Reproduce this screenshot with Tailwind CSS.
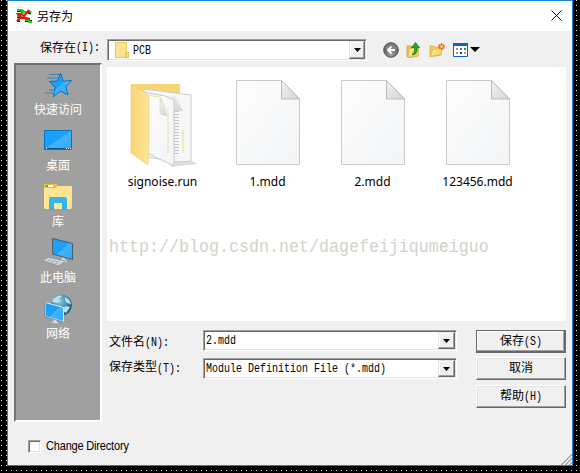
<!DOCTYPE html>
<html lang="zh-CN">
<head>
<meta charset="utf-8">
<title>另存为</title>
<script src="https://cdn.jsdelivr.net/npm/@tailwindcss/browser@4"></script>
</head>
<body class="w-[580px] h-[473px] overflow-hidden bg-black bg-[radial-gradient(circle_at_1.5px_0.5px,#e8e8e8_0.7px,transparent_0.8px)] bg-[length:5px_5px] pl-[7px] text-black text-[12px] font-['Liberation_Mono','Noto_Sans_CJK_SC',monospace]">
<svg class="absolute w-0 h-0">
  <defs>
    <linearGradient id="paper" x1="0" y1="0" x2="1" y2="1"><stop offset="0" stop-color="#fdfdfd"/><stop offset="1" stop-color="#f2f4f6"/></linearGradient>
    <linearGradient id="curl" x1="0" y1="0" x2="1" y2="1"><stop offset="0" stop-color="#f2f2f2"/><stop offset="1" stop-color="#d4d4d4"/></linearGradient>
    <linearGradient id="gold" x1="0" y1="0" x2="1" y2="1"><stop offset="0" stop-color="#fff0a8"/><stop offset="1" stop-color="#f2c94e"/></linearGradient>
    <linearGradient id="cover" x1="0" y1="0" x2="1" y2="0"><stop offset="0" stop-color="#f8d775"/><stop offset="1" stop-color="#ffe49a"/></linearGradient>
    <linearGradient id="blue" x1="0" y1="0" x2="1" y2="1"><stop offset="0" stop-color="#1aa0fa"/><stop offset=".5" stop-color="#1ba1fb"/><stop offset=".5" stop-color="#42b4ff"/><stop offset="1" stop-color="#2fa8fb"/></linearGradient>
    <radialGradient id="globe" cx=".4" cy=".3" r=".7"><stop offset="0" stop-color="#8fc9e0"/><stop offset=".6" stop-color="#3a88ad"/><stop offset="1" stop-color="#1d5777"/></radialGradient>
    <radialGradient id="ball" cx=".5" cy=".8" r=".8"><stop offset="0" stop-color="#a0a0a0"/><stop offset="1" stop-color="#4a4a4a"/></radialGradient>
    <symbol id="file" viewBox="0 0 64 85"><path d="M.5.5H45.500L63.500 18.500V84.500H.5Z" fill="url(#paper)" stroke="#c9cbcc"/><path d="M45.500.5V19H63.500Z" fill="url(#curl)" stroke="#bcbcbc"/></symbol>
  </defs>
</svg>
<main class="relative w-[566px] h-[466px] bg-[#f0f0f0] border border-[#1883d7] flex flex-col">
  <header class="h-[30px] shrink-0 bg-white flex items-center pl-[8px] pr-[10px]">
    <svg class="w-4 h-4" viewBox="0 0 16 16" fill="none"><path d="M1 2.500h4l3 2M12 4l3 1M1 8.500h4M9 12.500h3l2 1h2M1 12.500h3" stroke="#111" stroke-width="3"/><path d="M1 2h4l2 2h3M12 3l3 1M1 8h4M9 12h3l2 2h2M1 12h3" stroke="#08e010" stroke-width="2.200"/><path d="M1 13 5 9 2 6h3l3 2 5-6M4 10h6l4 1M7 8l4 3" stroke="#f00d0d" stroke-width="2"/></svg>
    <span class="ml-[5px] -mt-px text-[12px] leading-[16px] font-['Noto_Sans_CJK_SC',sans-serif]">另存为</span>
    <svg class="ml-auto -mt-[2px] w-[11px] h-[11px]" viewBox="0 0 11 11"><path d="m.5.5 10 10m0-10-10 10" stroke="#111"/></svg>
  </header>
  <div class="h-[32px] shrink-0 flex items-center pt-[6px] pl-[32px]">
    <div class="w-[67px] flex items-center leading-[18px] h-[18px] -mt-[2px]"><span>保存在</span><span class="text-[10px] scale-y-120">(I):</span></div>
    <div class="w-[260px] h-[22px] shrink-0 border border-t-[#a0a0a0] border-l-[#a0a0a0] border-b-white border-r-white shadow-[inset_1px_1px_#696969,inset_-1px_-1px_#e3e3e3] p-px bg-white flex items-center pl-[7px] text-[10px]">
      <svg class="w-[14px] h-[16px]" viewBox="0 0 14 16"><path d="M.5.5h11v9l2 1v5H.5Z" fill="#ffe391" stroke="#edc658"/><path d="M11 10v5.500" stroke="#d6a934"/></svg>
      <span class="ml-[4px] scale-y-120">PCB</span>
      <div class="ml-auto w-[16px] h-[18px] border border-t-[#e3e3e3] border-l-[#e3e3e3] border-r-[#696969] border-b-[#696969] bg-[#f0f0f0] shadow-[inset_-1px_-1px_#a0a0a0,inset_1px_1px_#fff] flex items-center justify-center"><svg class="w-[7px] h-[4px]" viewBox="0 0 7 4"><path d="M0 0h7L3.500 4Z"/></svg></div>
    </div>
    <svg class="ml-[16px] w-[16px] h-[16px] shrink-0" viewBox="0 0 16 16"><circle cx="8" cy="8" r="7.300" fill="url(#ball)" stroke="#555"/><path d="M2 7a6 6 0 0 1 12 0" fill="#fff" fill-opacity=".2"/><path d="M12 8H5m3.500-3.500L5 8l3.500 3.500" fill="none" stroke="#fff" stroke-width="1.800"/></svg>
    <svg class="ml-[7px] w-[15px] h-[16px] shrink-0" viewBox="0 0 15 16"><path d="M1 4h4l1 1h6v9l-8 1.500-3-1Z" fill="#e9c050" stroke="#c99d33" stroke-width=".7"/><path d="m3 7 10-2-1 9-10 1.500Z" fill="url(#gold)" stroke="#d8ad3c" stroke-width=".7"/><path d="M6 12.500q3-1 2.500-7H5.500L9.500.5l4 5h-2.300q.5 6-3.700 7.500Z" fill="#27a52c" stroke="#117619" stroke-width=".7"/></svg>
    <svg class="ml-[8px] w-[16px] h-[16px] shrink-0" viewBox="0 0 16 16"><path d="M1 4h4l1 1.500h6V13l-10 1.500H1Z" fill="#f3cd65" stroke="#d2a43a" stroke-width=".7"/><path d="m3.500 7.500 10-1-1.500 6.500-10.500 1.500Z" fill="url(#gold)" stroke="#dcae3d" stroke-width=".7"/><path d="M12.500 1v7M9 4.500h7M10.200 2.200l4.600 4.600m0-4.600-4.600 4.600" stroke="#ff5920" stroke-width="1.300"/><circle cx="12.500" cy="4.500" r="1.300" fill="#ffe98b"/></svg>
    <svg class="ml-[8px] w-[15px] h-[15px] shrink-0" viewBox="0 0 15 15"><path d="M.5.5h14v13H.5Z" fill="#fff" stroke="#0a64cf"/><path d="M0 0h15v3H0Z" fill="#0a64cf"/><path d="M3 5h2v2H3Z" fill="#a88bc0"/><path d="M7 5h2v2H7Z" fill="#3675dc"/><path d="M11 5h2v2h-2Z" fill="#209a34"/><path d="M3 9h2v2H3Z" fill="#ef7d52"/><path d="M7 9h2v2H7Z" fill="#123a93"/><path d="M11 9h2v2h-2Z" fill="#d8a522"/></svg>
    <svg class="ml-[2px] -mt-[2px] w-[10px] h-[5px] shrink-0" viewBox="0 0 10 5"><path d="M0 0h10L5 5Z"/></svg>
  </div>
  <div class="h-[359px] shrink-0 flex pl-[6px]">
    <nav class="w-[88px] shrink-0 bg-[#a0a0a0] border-2 border-t-[#737373] border-l-[#737373] border-b-white border-r-white flex flex-col items-center pt-[5px] text-white text-[12px] leading-[14px] font-['Noto_Sans_CJK_SC',sans-serif]">
      <div class="h-[56px] flex flex-col items-center"><svg class="w-[32px] h-[32px]" viewBox="0 0 32 32"><path d="m18.500 3 3 8.300 8.500-1-6.200 6.500 2.200 8.200-7.500-4-7 5.500 1.500-9-5.500-6 8-.5Z" fill="url(#blue)" stroke="#0b72bd"/><path d="M7 4.500h11M5 8h11M7 20h5M3 23h8" stroke="#257fbe" stroke-width=".9"/></svg><span>快速访问</span></div>
      <div class="h-[56px] flex flex-col items-center"><svg class="w-[32px] h-[32px]" viewBox="0 0 32 32"><path d="M2.500 4.500h27v19h-27Z" fill="url(#blue)" stroke="#0b72bd"/><path d="M3 22.500h26" stroke="#075591"/><path d="M4 22.500h1m19 0h1m1 0h1m1 0h1" stroke="#fff"/></svg><span>桌面</span></div>
      <div class="h-[56px] flex flex-col items-center"><svg class="w-[32px] h-[32px]" viewBox="0 0 32 32"><path d="M2 3q0-1 1-1h11l2 2h13q1 0 1 1v20q0 2-2 2H4q-2 0-2-2Z" fill="#ffe593"/><path d="M2 5V3q0-1 1-1h11l1.500 2-2 2H2Z" fill="#f5bd27"/><path d="M4 3h7v2H4Z" fill="#fff"/><path d="M4 3h2v2H4Z" fill="#49b05e"/><path d="M7 28V17q0-2 2-2h14q2 0 2 2v11h-5v-7h-8v7Z" fill="#35b4e7"/></svg><span>库</span></div>
      <div class="h-[56px] flex flex-col items-center"><svg class="w-[32px] h-[32px]" viewBox="0 0 32 32"><path d="m10.500.5 20 5v16l-20-5.500Z" fill="url(#blue)" stroke="#4b5f6d"/><path d="m19 19 5 1.500v2l3 1-4 1.500-7-2 3-1Z" fill="#d4d8db" stroke="#858b90" stroke-width=".6"/><path d="m6 19 17 4-6 5L1 23Z" fill="#dde1e3" stroke="#7b8084" stroke-width=".7"/><path d="m5 21 15 4M3 22.500l15 4M10 20l-5 4m9-3-5 4m9-3-5 4" stroke="#9ba1a6" stroke-width=".6"/></svg><span>此电脑</span></div>
      <div class="h-[56px] flex flex-col items-center"><svg class="w-[32px] h-[32px]" viewBox="0 0 32 32"><circle cx="19.500" cy="11" r="10.500" fill="url(#globe)"/><path d="M11 5q6-5 9-3l-3 3 2 3-4 1-5-1Zm12-2q5 2 6 7l-4-1-2-3Zm0 9 5 1-4 6-3-2Z" fill="#b8dfe7"/><path d="m3.500 8.500 18 5v14l-18-5Z" fill="url(#blue)" stroke="#dce6ec"/><path d="M3 8v15l18 5" stroke="#4d6470" fill="none" stroke-width=".6"/><path d="m11 25 4 1v1.500l3 1-4 1.500-7-2 4-1Z" fill="#d8dcdf" stroke="#858b90" stroke-width=".5"/></svg><span>网络</span></div>
    </nav>
    <section class="ml-[5px] flex flex-col w-[459px]">
      <div class="mt-[4px] h-[254px] shrink-0 bg-white pt-[9px]">
        <div class="flex pl-[3px] text-[12px] leading-[16px] font-['Noto_Sans',sans-serif]">
          <div class="w-[105px] flex flex-col items-center"><svg class="w-[72px] h-[96px]" viewBox="0 0 72 96"><path d="m44 91 26-3-5-3H45Z" fill="#ddd"/><path d="M4 8h49v72H15Z" fill="#f7d575"/><path d="m17 13 47 6v66l-12 1-34-5Z" fill="#f6f7f7" stroke="#cecece"/><path d="M37 20h11l8 15H45" fill="url(#curl)"/><path d="M49 35v45" stroke="#c5c5c5" stroke-width="6" stroke-dasharray="1 2"/><path d="M56 54v23" stroke="#f6dc8c"/><path d="m15 16 23 4 9 4v66L20 77Z" fill="url(#paper)" stroke="#c9c9c9"/><path d="m20 19 13 2 8 16v40" fill="none" stroke="#f5dda0"/><path d="M33 22v16l7 2Z" fill="url(#curl)" stroke="#ccc" stroke-width=".5"/><path d="m4 8 16 10 2 4v43l-1 24L4 77Z" fill="url(#cover)" stroke="#edcb6b" stroke-width=".6"/></svg><span class="mt-[2px]">signoise.run</span></div>
          <div class="w-[105px] flex flex-col items-center"><svg class="mt-[4px] w-[64px] h-[85px]"><use href="#file"/></svg><span class="mt-[9px]">1.mdd</span></div>
          <div class="w-[105px] flex flex-col items-center"><svg class="mt-[4px] w-[64px] h-[85px]"><use href="#file"/></svg><span class="mt-[9px]">2.mdd</span></div>
          <div class="w-[105px] flex flex-col items-center"><svg class="mt-[4px] w-[64px] h-[85px]"><use href="#file"/></svg><span class="mt-[9px]">123456.mdd</span></div>
        </div>
        <p class="mt-[48px] ml-[2px] text-[16.660px] leading-[20px] text-[#d2d2cc] scale-y-110">http://blog.csdn.net/dagefeijiqumeiguo</p>
      </div>
      <div class="mt-[9px] flex justify-between">
        <div class="flex flex-col gap-[7px]">
          <div class="flex h-[21px]"><div class="w-[96px] pl-[2px] pt-[4px] flex items-center"><span>文件名</span><span class="text-[10px] scale-y-120">(N):</span></div>
            <div class="w-[254px] border border-t-[#a0a0a0] border-l-[#a0a0a0] border-b-white border-r-white shadow-[inset_1px_1px_#696969,inset_-1px_-1px_#e3e3e3] p-px bg-white flex items-center pl-[2px] text-[10px]"><span class="scale-y-120">2.mdd</span><div class="ml-auto w-[17px] h-full border border-t-[#e3e3e3] border-l-[#e3e3e3] border-r-[#696969] border-b-[#696969] bg-[#f0f0f0] shadow-[inset_-1px_-1px_#a0a0a0,inset_1px_1px_#fff] flex items-center justify-center"><svg class="w-[7px] h-[4px]" viewBox="0 0 7 4"><path d="M0 0h7L3.500 4Z"/></svg></div></div></div>
          <div class="flex h-[21px]"><div class="w-[96px] pl-[2px] flex items-center"><span class="-mt-px">保存类型</span><span class="-mt-px text-[10px] scale-y-120">(T):</span></div>
            <div class="w-[254px] border border-t-[#a0a0a0] border-l-[#a0a0a0] border-b-white border-r-white shadow-[inset_1px_1px_#696969,inset_-1px_-1px_#e3e3e3] p-px bg-white flex items-center pl-[2px] text-[10px]"><span class="scale-y-120">Module Definition File (*.mdd)</span><div class="ml-auto w-[17px] h-full border border-t-[#e3e3e3] border-l-[#e3e3e3] border-r-[#696969] border-b-[#696969] bg-[#f0f0f0] shadow-[inset_-1px_-1px_#a0a0a0,inset_1px_1px_#fff] flex items-center justify-center"><svg class="w-[7px] h-[4px]" viewBox="0 0 7 4"><path d="M0 0h7L3.500 4Z"/></svg></div></div></div>
        </div>
        <div class="w-[90px] flex flex-col gap-[4px]">
          <button class="h-[23px] border border-[#696969] shadow-[inset_-1px_-1px_#696969,inset_-2px_-2px_#a0a0a0,inset_1px_1px_#fff] flex items-center justify-center"><span>保存</span><span class="text-[10px] scale-y-120">(S)</span></button>
          <button class="h-[23px] border border-t-white border-l-white border-r-[#696969] border-b-[#696969] shadow-[inset_-1px_-1px_#a0a0a0,inset_1px_1px_#e3e3e3] flex items-center justify-center">取消</button>
          <button class="mt-[1px] h-[23px] border border-t-white border-l-white border-r-[#696969] border-b-[#696969] shadow-[inset_-1px_-1px_#a0a0a0,inset_1px_1px_#e3e3e3] flex items-center justify-center"><span>帮助</span><span class="text-[10px] scale-y-120">(H)</span></button>
        </div>
      </div>
    </section>
  </div>
  <label class="mt-[18px] ml-[20px] h-[13px] flex items-center font-['Liberation_Sans',sans-serif] text-[11px] tracking-[-0.18px]"><span class="w-[13px] h-[13px] bg-white border border-t-[#a0a0a0] border-l-[#a0a0a0] border-b-white border-r-white shadow-[inset_1px_1px_#696969,inset_-1px_-1px_#e3e3e3]"></span><span class="ml-[5px] scale-y-110">Change Directory</span></label>
  <svg class="absolute right-0 bottom-0 w-[12px] h-[12px]" viewBox="0 0 12 12"><path d="M1 12 12 1M5 12l7-7M9 12l3-3" stroke="#999" stroke-width="1.500"/><path d="M0 12 12 0M4 12l8-8M8 12l4-4" stroke="#fff" stroke-width=".6"/></svg>
</main>
</body>
</html>
